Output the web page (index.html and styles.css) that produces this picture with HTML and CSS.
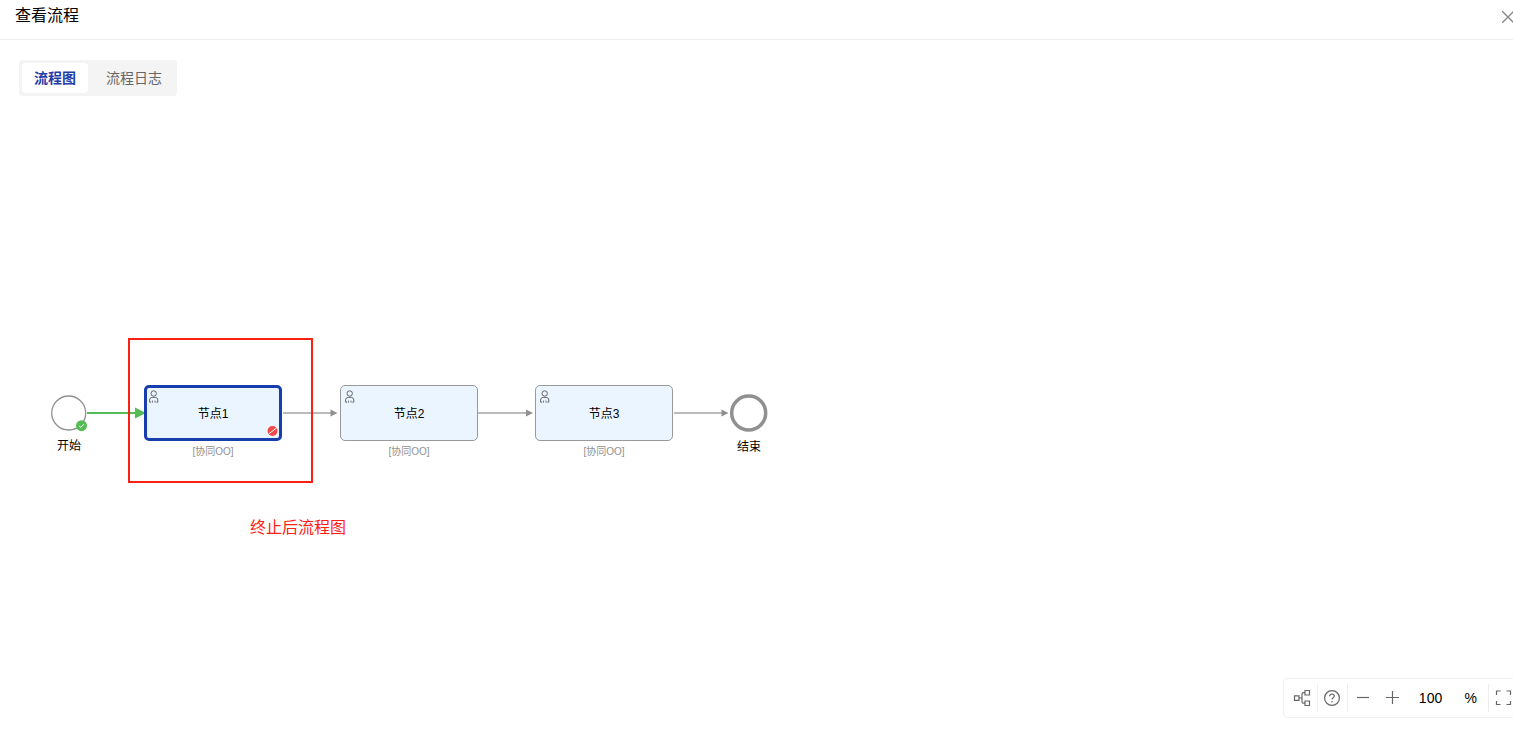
FILE: index.html
```html
<!DOCTYPE html>
<html lang="zh-CN">
<head>
<meta charset="utf-8">
<meta name="viewport" content="width=device-width, initial-scale=1">
<title>查看流程</title>
<link rel="stylesheet" href="styles.css">
</head>
<body>
<svg class="sprite" aria-hidden="true">
  <symbol id="user" viewBox="0 0 10 13">
    <circle cx="4.700" cy="3.500" r="2.700"/>
    <path d="M3.200 7.400H2.800Q.6 7.700.6 10V12.200H2M3.200 7.400H6.600Q8.800 7.700 8.800 10V12.200H7.400M3.400 10.600V12.600M6 10.600V12.600"/>
  </symbol>
</svg>

<header class="header">
  <h1 class="title">查看流程</h1>
  <button class="close" type="button" aria-label="关闭">
    <svg width="12" height="12" viewBox="0 0 12 12"><path d="M0 0l12 12M12 0L0 12"/></svg>
  </button>
</header>

<nav class="tabs" role="tablist">
  <button class="tab tab-active" type="button" role="tab" aria-selected="true">流程图</button>
  <button class="tab" type="button" role="tab" aria-selected="false">流程日志</button>
</nav>

<main class="canvas">
  <svg class="edges" width="800" height="360" viewBox="0 0 800 360" aria-hidden="true">
    <path class="edge-done" d="M87 317H136"/>
    <path class="arrow-done" d="M135 311.500L146 317L135 322.500Z"/>
    <path class="edge" d="M283 317H332M478 317H527M674 317H723"/>
    <path class="arrow" d="M330.500 313.500L337.500 317L330.500 320.500ZM526 313.500L533 317L526 320.500ZM721.500 313.500L728.500 317L721.500 320.500Z"/>
  </svg>

  <div class="event event-start">
    <svg class="circle" width="36" height="36" viewBox="0 0 36 36">
      <circle class="ring" cx="17.700" cy="18" r="17"/>
      <circle class="badge-ok" cx="30.500" cy="30.700" r="5.500"/>
      <path class="badge-tick" d="M28 30.900L29.800 32.400L33.100 29.100"/>
    </svg>
    <span>开始</span>
  </div>

  <div class="node node-1">
    <div class="box box-current">
      <svg class="user" width="10" height="13"><use href="#user"/></svg>
      <span>节点1</span>
      <svg class="badge-stop" width="11" height="11" viewBox="0 0 11 11"><circle cx="5.500" cy="5" r="5"/><path d="M1.500 8L9.500 2"/></svg>
    </div>
    <span class="assignee">[协同OO]</span>
  </div>

  <div class="node node-2">
    <div class="box">
      <svg class="user" width="10" height="13"><use href="#user"/></svg>
      <span>节点2</span>
    </div>
    <span class="assignee">[协同OO]</span>
  </div>

  <div class="node node-3">
    <div class="box">
      <svg class="user" width="10" height="13"><use href="#user"/></svg>
      <span>节点3</span>
    </div>
    <span class="assignee">[协同OO]</span>
  </div>

  <div class="event event-end">
    <svg class="circle" width="38" height="38" viewBox="0 0 38 38"><circle class="ring ring-end" cx="18.700" cy="19" r="17"/></svg>
    <span>结束</span>
  </div>

  <div class="highlight"></div>
  <p class="note">终止后流程图</p>

  <div class="toolbar">
    <button class="tool divided" type="button" aria-label="布局">
      <svg width="18" height="18" viewBox="0 0 18 18"><path d="M1.500 6.800h4.500v4.500H1.500zM12 1.500h4.500v4.500H12zM12 12h4.500v4.500H12zM6 9h3M12 3.700h-1.500Q9 3.700 9 5.200V12.700Q9 14.200 10.500 14.200H12"/></svg>
    </button>
    <button class="tool divided" type="button" aria-label="帮助">
      <svg width="18" height="18" viewBox="0 0 18 18"><circle cx="9" cy="9" r="7.400"/><path d="M6.700 7.200C6.700 4.300 11.300 4.300 11.300 7.100C11.300 8.700 9 8.800 9 10.600M9 12v1.500"/></svg>
    </button>
    <button class="tool" type="button" aria-label="缩小">
      <svg width="18" height="18" viewBox="0 0 18 18"><path d="M3 8.500h12"/></svg>
    </button>
    <button class="tool" type="button" aria-label="放大">
      <svg width="18" height="18" viewBox="0 0 18 18"><path d="M2 8.500h13M8.500 2v13"/></svg>
    </button>
    <label class="zoom"><input class="zoom-value" type="text" value="100" aria-label="缩放比例"><span>%</span></label>
    <button class="tool" type="button" aria-label="全屏">
      <svg width="18" height="18" viewBox="0 0 18 18"><path d="M1.500 6V2H5.500M11.500 2H15.500V6M15.500 12V15.500H11.500M5.500 15.500H1.500V12"/></svg>
    </button>
  </div>
</main>
</body>
</html>
```

FILE: styles.css
```css
* { box-sizing: border-box; }

body {
  margin: 0;
  height: 100vh;
  display: flex;
  flex-direction: column;
  overflow: hidden;
  background: #fff;
  color: #000;
  font-family: "Liberation Sans", "Noto Sans CJK SC", sans-serif;
  font-size: 12px;
}

button {
  margin: 0;
  padding: 0;
  border: 0;
  background: none;
  font: inherit;
  cursor: pointer;
}

svg { display: block; fill: none; }

.sprite { position: absolute; width: 0; height: 0; }

.header {
  display: flex;
  justify-content: space-between;
  align-items: center;
  height: 40px;
  padding: 0 0 8px 15px;
  border-bottom: 1px solid #eee;
  overflow: hidden;
}

.title {
  margin: 0;
  font-size: 16px;
  font-weight: 400;
  line-height: 24px;
}

.close { margin: 2px -1px 0 0; stroke: #888; stroke-width: 1.4; }

.tabs {
  display: flex;
  align-self: flex-start;
  gap: 6px;
  margin: 20px 19px 0;
  padding: 3px;
  border-radius: 4px;
  background: #f4f4f4;
}

.tab {
  height: 30px;
  padding: 0 12px 2px;
  border-radius: 4px;
  color: #666;
  font-size: 14px;
}

.tab-active {
  background: #fff;
  color: #1e3caa;
  font-weight: 700;
}

.canvas {
  position: relative;
  flex: 1;
  overflow: hidden;
}

.edges { position: absolute; left: 0; top: 0; }
.edge { stroke: #bbb; stroke-width: 2; }
.arrow { fill: #909090; }
.edge-done { stroke: #55bb55; stroke-width: 2; }
.arrow-done { fill: #55bb55; }

.event {
  position: absolute;
  display: flex;
  flex-direction: column;
  align-items: center;
  gap: 6px;
  line-height: 18px;
}

.event-start { left: 51px; top: 299px; }
.event-end { left: 730px; top: 298px; }

.circle { overflow: visible; }
.ring { fill: #fff; stroke: #909090; stroke-width: 1.3; }
.ring-end { stroke-width: 3.5; }
.badge-ok { fill: #55bb55; }
.badge-tick { stroke: #fff; }

.node {
  position: absolute;
  top: 289px;
  width: 138px;
  text-align: center;
}

.node-1 { left: 144px; }
.node-2 { left: 340px; }
.node-3 { left: 535px; }

.box {
  position: relative;
  display: grid;
  place-items: center;
  height: 56px;
  padding-bottom: 2px;
  border: 1px solid #999;
  border-radius: 5px;
  background: #eaf5ff;
}

.box-current { border: 3px solid #163fad; }

.user {
  position: absolute;
  left: 4px;
  top: 4px;
  stroke: #666;
}

.box-current .user { left: 2px; top: 2px; }

.badge-stop {
  position: absolute;
  right: 1px;
  bottom: 1px;
  fill: #f24949;
}

.badge-stop path { stroke: #fff; }

.assignee {
  display: block;
  margin-top: 3px;
  color: #909090;
  font-size: 10px;
  line-height: 15px;
}

.highlight {
  position: absolute;
  left: 128px;
  top: 242px;
  width: 185px;
  height: 145px;
  border: 2px solid #fc2013;
}

.note {
  position: absolute;
  left: 250px;
  top: 420px;
  margin: 0;
  color: #fc2013;
  font-size: 16px;
  line-height: 24px;
}

.toolbar {
  position: absolute;
  right: -11px;
  bottom: 13px;
  display: flex;
  align-items: center;
  height: 40px;
  padding: 0 4px;
  border: 1px solid #f0f0f0;
  border-radius: 4px;
  background: #fff;
}

.tool {
  display: grid;
  place-items: center;
  width: 30px;
  height: 28px;
  stroke: #666;
  stroke-width: 1.2;
}

.divided { border-right: 1px solid #eee; }

.zoom {
  display: flex;
  align-items: center;
  height: 28px;
  padding-right: 11px;
  border-right: 1px solid #eee;
  font-size: 14px;
}

.zoom-value {
  width: 46px;
  margin-right: 11px;
  padding: 0;
  border: 0;
  background: none;
  color: inherit;
  font: inherit;
  text-align: center;
}
```
